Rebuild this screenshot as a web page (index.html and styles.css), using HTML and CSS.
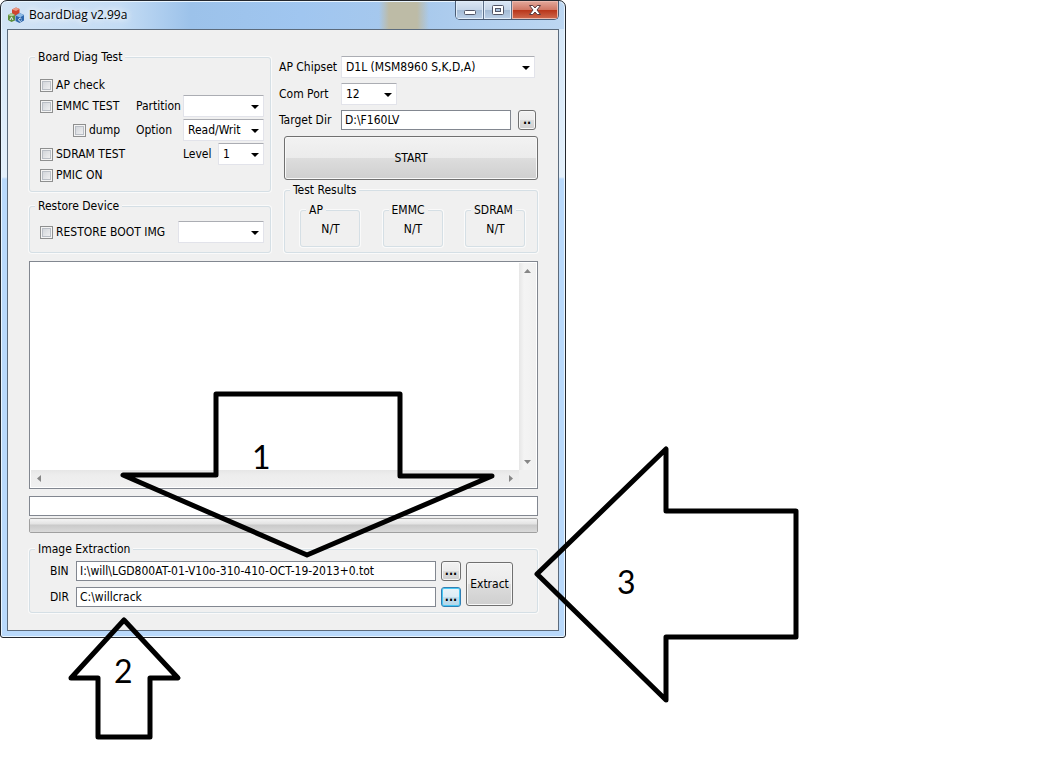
FILE: index.html
```html
<!DOCTYPE html>
<html lang="en">
<head>
<meta charset="utf-8">
<title>BoardDiag v2.99a</title>
<link rel="stylesheet" href="styles.css">
</head>
<body>
<main class="desktop">
  <section class="window">
    <header class="titlebar">
      <svg class="app-icon" width="16" height="16" viewBox="0 0 16 16" aria-hidden="true">
        <path d="M4 2.500L8 .5l3.500 1.500v5.500L8 9 4 7.500z" fill="#cf4630"/>
        <path d="M4 2.500L8 .5l3.500 1.500L8 4z" fill="#e99a86"/>
        <path d="M0 8l3.500-2L7 8v5.500L3.500 15 0 13z" fill="#5d8f3c"/>
        <path d="M0 8l3.500-2L7 8 3.500 9.500z" fill="#b3cf9a"/>
        <path d="M7.500 8.500l4-2.500L16 8v5.500L11.500 16l-4-2z" fill="#2c66ac"/>
        <path d="M7.500 8.500l4-2.500L16 8l-4 2.500z" fill="#8fbbe6"/>
        <path d="M2 13l1.500-3L5 13M13.500 12a1.500 1.500 0 1 0 0 1.500" fill="none" stroke="#e4eef8"/>
      </svg>
      <h1 class="title">BoardDiag v2.99a</h1>
      <div class="caption-buttons">
        <button class="cap" type="button" aria-label="Minimize">
          <svg width="14" height="12" viewBox="0 0 14 12"><rect x="1.500" y="6.500" width="11" height="4" rx="1" fill="#fff" stroke="#535666"/></svg>
        </button>
        <button class="cap" type="button" aria-label="Maximize">
          <svg width="14" height="12" viewBox="0 0 14 12"><rect x="1.500" y="1.500" width="11" height="9" rx="1" fill="#fff" stroke="#535666"/><rect x="4.500" y="4.500" width="5" height="3" fill="#a9c2dd" stroke="#535666"/></svg>
        </button>
        <button class="cap cap-close" type="button" aria-label="Close">
          <svg width="14" height="12" viewBox="0 0 14 12"><path d="M1.500 1.500h3.300L7 4l2.200-2.500h3.300L9 6l3.500 4.500H9.200L7 8l-2.200 2.500H1.500L5 6z" fill="#fff" stroke="#5a3a3e"/></svg>
        </button>
      </div>
    </header>

    <form class="client">
      <div class="columns">
        <div class="left">
          <fieldset class="group">
            <legend>Board Diag Test</legend>
            <div class="tests">
              <div class="row"><label class="check"><input type="checkbox">AP check</label></div>
              <div class="row">
                <label class="check"><input type="checkbox">EMMC TEST</label>
                <label class="side" for="partition">Partition</label>
                <span class="combo wide"><select id="partition"><option></option></select></span>
              </div>
              <div class="row">
                <label class="check indent"><input type="checkbox">dump</label>
                <label class="side" for="option">Option</label>
                <span class="combo wide"><select id="option"><option>Read/Write</option></select></span>
              </div>
              <div class="row">
                <label class="check"><input type="checkbox">SDRAM TEST</label>
                <label class="level" for="level">Level</label>
                <span class="combo small"><select id="level"><option>1</option></select></span>
              </div>
              <div class="row"><label class="check"><input type="checkbox">PMIC ON</label></div>
            </div>
          </fieldset>
          <fieldset class="group">
            <legend>Restore Device</legend>
            <div class="restore row">
              <label class="check"><input type="checkbox">RESTORE BOOT IMG</label>
              <span class="combo image"><select aria-label="Boot image"><option></option></select></span>
            </div>
          </fieldset>
        </div>

        <div class="right">
          <div class="settings">
            <label for="chipset">AP Chipset</label>
            <span class="combo chipset"><select id="chipset"><option>D1L (MSM8960 S,K,D,A)</option></select></span>
            <label for="port">Com Port</label>
            <span class="combo port"><select id="port"><option>12</option></select></span>
            <label for="target">Target Dir</label>
            <div class="target">
              <input class="text" id="target" type="text" value="D:\F160LV">
              <button class="btn browse" type="button" aria-label="Browse target">..</button>
            </div>
          </div>
          <button class="btn start" type="button">START</button>
          <fieldset class="group results-group">
            <legend>Test Results</legend>
            <div class="results">
              <fieldset class="group"><legend>AP</legend><output>N/T</output></fieldset>
              <fieldset class="group"><legend>EMMC</legend><output>N/T</output></fieldset>
              <fieldset class="group"><legend>SDRAM</legend><output>N/T</output></fieldset>
            </div>
          </fieldset>
        </div>
      </div>

      <div class="log">
        <textarea aria-label="Log"></textarea>
        <div class="bar bar-v">
          <svg width="7" height="4" viewBox="0 0 7 4"><path d="M0 4L3.500 0 7 4z" fill="#868686"/></svg>
          <svg width="7" height="4" viewBox="0 0 7 4"><path d="M0 0h7L3.500 4z" fill="#868686"/></svg>
        </div>
        <div class="bar bar-h">
          <svg width="4" height="7" viewBox="0 0 4 7"><path d="M4 0v7L0 3.500z" fill="#868686"/></svg>
          <svg width="4" height="7" viewBox="0 0 4 7"><path d="M0 0v7l4-3.500z" fill="#868686"/></svg>
        </div>
      </div>
      <input class="text status" type="text" aria-label="Status">
      <progress value="0" max="100" aria-label="Progress"></progress>

      <fieldset class="group">
        <legend>Image Extraction</legend>
        <div class="extraction">
          <label for="bin">BIN</label>
          <input class="text" id="bin" type="text" value="I:\will\LGD800AT-01-V10o-310-410-OCT-19-2013+0.tot">
          <button class="btn dots" type="button" aria-label="Browse BIN">...</button>
          <button class="btn extract" type="button">Extract</button>
          <label for="dir">DIR</label>
          <input class="text" id="dir" type="text" value="C:\willcrack">
          <button class="btn dots focused" type="button" aria-label="Browse DIR">...</button>
        </div>
      </fieldset>
    </form>
  </section>

  <svg class="notes" width="810" height="750" viewBox="0 0 810 750">
    <g class="arrows">
      <path d="M216 394H400V476H492L307 555 123 475H216z"/>
      <path d="M124 620L178 678H150V737H98V678H71z"/>
      <path d="M537 574L666 449V511H796V637H666V700z"/>
    </g>
    <text x="252" y="469">1</text>
    <text x="114" y="683">2</text>
    <text x="617" y="594">3</text>
  </svg>
</main>
</body>
</html>
```
FILE: styles.css
```css
* { box-sizing: border-box; }

body {
  margin: 0;
  background: #fff;
  color: #000;
  font: 12px/16px "DejaVu Sans Condensed", "DejaVu Sans", sans-serif;
}

input, select, button, textarea { font: inherit; color: inherit; }

.desktop { position: relative; min-height: 100vh; }

.window {
  width: 566px;
  max-width: 100%;
  padding: 0 6px 6px;
  border: 1px solid #23272e;
  border-radius: 7px 7px 3px 3px;
  background:
    linear-gradient(90deg, transparent 378px, #bdbba6 388px, #bdbba6 416px, transparent 428px) 0 0 / 100% 28px no-repeat,
    linear-gradient(90deg, #d3e4f5 0, #c4dcf4 120px, #9cc2ea 190px, #a0c6f0 300px, #a8c9ec 420px, #bdd7f2 100%) 0 0 / 100% 28px no-repeat,
    linear-gradient(#d3e6f8 0, #e4f0fb 176px, #b9d9fb 178px);
  box-shadow: inset 0 0 0 1px #e9f5ff;
}

.titlebar { display: flex; align-items: flex-start; height: 28px; }
.app-icon { margin: 6px 6px 0 1px; }
.title {
  flex: 1;
  margin: 5px 0 0 -1px;
  font: 12px/18px "Open Sans", "Noto Sans", sans-serif;
  text-shadow: 0 0 6px #fff, 0 0 8px #fff;
}

.caption-buttons {
  display: flex;
  height: 19px;
  border: 1px solid #4a5c74;
  border-top: 0;
  border-radius: 0 0 5px 5px;
  overflow: hidden;
}
.cap {
  display: flex;
  align-items: center;
  justify-content: center;
  width: 28px;
  padding: 0;
  border: 0;
  border-right: 1px solid #5d7089;
  background: linear-gradient(#dbe7f4 0, #c5d5e8 50%, #a3bad4 50%, #bcd1e8 100%);
  box-shadow: inset 0 0 0 1px #e1edf9;
}
.cap-close {
  width: 46px;
  border-right: 0;
  background: linear-gradient(#e3a99c 0, #cf7663 50%, #b83419 50%, #cf6b50 100%);
  box-shadow: inset 0 0 0 1px #ecb9ad;
}

.client {
  padding: 19px 20px 17px 21px;
  border: 1px solid #5c6b7c;
  background: #f0f0f0;
}

.columns { display: flex; gap: 8px; }
.left { flex: 0 0 242px; display: flex; flex-direction: column; gap: 6px; }
.right { flex: 1; min-width: 0; padding-top: 7px; }

.group {
  min-width: 0;
  margin: 0;
  padding: 0;
  border: 1px solid #d5dfe5;
  border-radius: 3px;
  box-shadow: 0 0 0 1px #fafafa;
}
legend { margin-left: 5px; padding: 0 3px; background: #f0f0f0; }

.tests { display: grid; gap: 2px; padding: 12px 6px 8px 10px; }
.row { display: flex; align-items: center; }
.check { flex: 1; display: flex; align-items: center; gap: 3px; white-space: nowrap; }
.check input {
  appearance: none;
  width: 13px;
  height: 13px;
  margin: 0;
  border: 1px solid #8e8f8f;
  background: linear-gradient(135deg, #cbcfd5, #f6f6f6);
  box-shadow: inset 0 0 0 1px #f4f4f4, inset 0 0 0 2px #b9bec5;
}
.indent { padding-left: 33px; }
.side { width: 47px; }
.level { width: 35px; }
.restore { padding: 7px 6px 9px 10px; }

.combo { position: relative; display: block; height: 22px; }
.combo::after {
  content: "";
  position: absolute;
  right: 5px;
  top: 10px;
  border: 4px solid transparent;
  border-top-color: #000;
  border-bottom: 0;
  pointer-events: none;
}
.combo select {
  appearance: none;
  display: block;
  width: 100%;
  height: 100%;
  padding: 0 22px 0 4px;
  border: 1px solid #e2e3ea;
  border-top-color: #abadb3;
  border-radius: 1px;
  background: #fff;
  overflow: hidden;
  text-overflow: clip;
}
.wide { width: 81px; }
.small { width: 46px; }
.image { width: 86px; }
.port { width: 56px; }
.chipset { margin-right: 3px; }

.settings {
  display: grid;
  grid-template-columns: 62px 1fr;
  row-gap: 5px;
  align-items: center;
  white-space: nowrap;
}
.target { display: flex; justify-content: space-between; gap: 7px; padding-right: 2px; }
.target .text { flex: 1; min-width: 0; }

.text {
  height: 20px;
  padding: 0 3px;
  border: 1px solid #828790;
  border-radius: 0;
  background: #fff;
}

.btn {
  padding: 0;
  border: 1px solid #707070;
  border-radius: 3px;
  background: linear-gradient(#f2f2f2 0, #ebebeb 50%, #dddddd 50%, #cfcfcf 100%);
  box-shadow: inset 0 0 0 1px #f8f8f8;
  text-align: center;
}
.browse { width: 18px; height: 20px; font-weight: bold; }
.dots { width: 20px; height: 20px; font-weight: bold; }
.focused {
  border-color: #2f7fb4;
  background: linear-gradient(#e9f4fa 0, #dcecf5 50%, #c4dfee 50%, #b5d6e8 100%);
  box-shadow: inset 0 0 0 1px #48c8f4;
}
.start { display: block; width: calc(100% - 5px); height: 44px; margin: 6px 0 2px 5px; }

.results-group { margin-left: 5px; }
.results { display: flex; justify-content: space-between; padding: 4px 12px 5px 15px; }
.results .group { flex: 0 0 60px; }
.results output { display: block; padding-left: 1px; line-height: 22px; height: 28px; text-align: center; }

.log {
  display: grid;
  grid-template-columns: 1fr 17px;
  grid-template-rows: 207px 17px;
  margin-top: 8px;
  padding: 1px;
  border: 1px solid #828790;
  background: #f0f0f0;
  box-shadow: inset 0 0 0 1px #fff;
}
.log textarea { display: block; width: 100%; height: 100%; border: 0; resize: none; background: #fff; }
.bar { display: flex; justify-content: space-between; align-items: center; }
.bar-v { flex-direction: column; padding: 6px 0; background: linear-gradient(90deg, #e6e6e6, #f4f4f4 30%, #f0f0f0); }
.bar-h { padding: 0 6px; background: linear-gradient(#e6e6e6, #ededed 30%, #f0f0f0); }

.status { display: block; width: 100%; margin-top: 7px; }
progress {
  appearance: none;
  display: block;
  width: 100%;
  height: 15px;
  margin: 2px 0 8px;
  border: 1px solid #a0a0a0;
  border-radius: 2px;
  overflow: hidden;
}
progress::-webkit-progress-bar {
  background: linear-gradient(#f4f4f4 0, #e2e2e2 40%, #c9c9c9 45%, #dadada 100%);
}

.extraction {
  display: grid;
  grid-template-columns: 21px 1fr 20px 47px;
  gap: 6px 5px;
  align-items: center;
  padding: 4px 24px 5px 20px;
}
.extraction .text { width: 100%; min-width: 0; }
.extract { grid-column: 4; grid-row: 1 / 3; height: 44px; }

.notes { position: absolute; left: 0; top: 0; pointer-events: none; }
.arrows path { fill: none; stroke: #000; stroke-width: 5; stroke-linejoin: round; }
.notes text { font: 32px Lato, "Noto Sans", sans-serif; }
```
